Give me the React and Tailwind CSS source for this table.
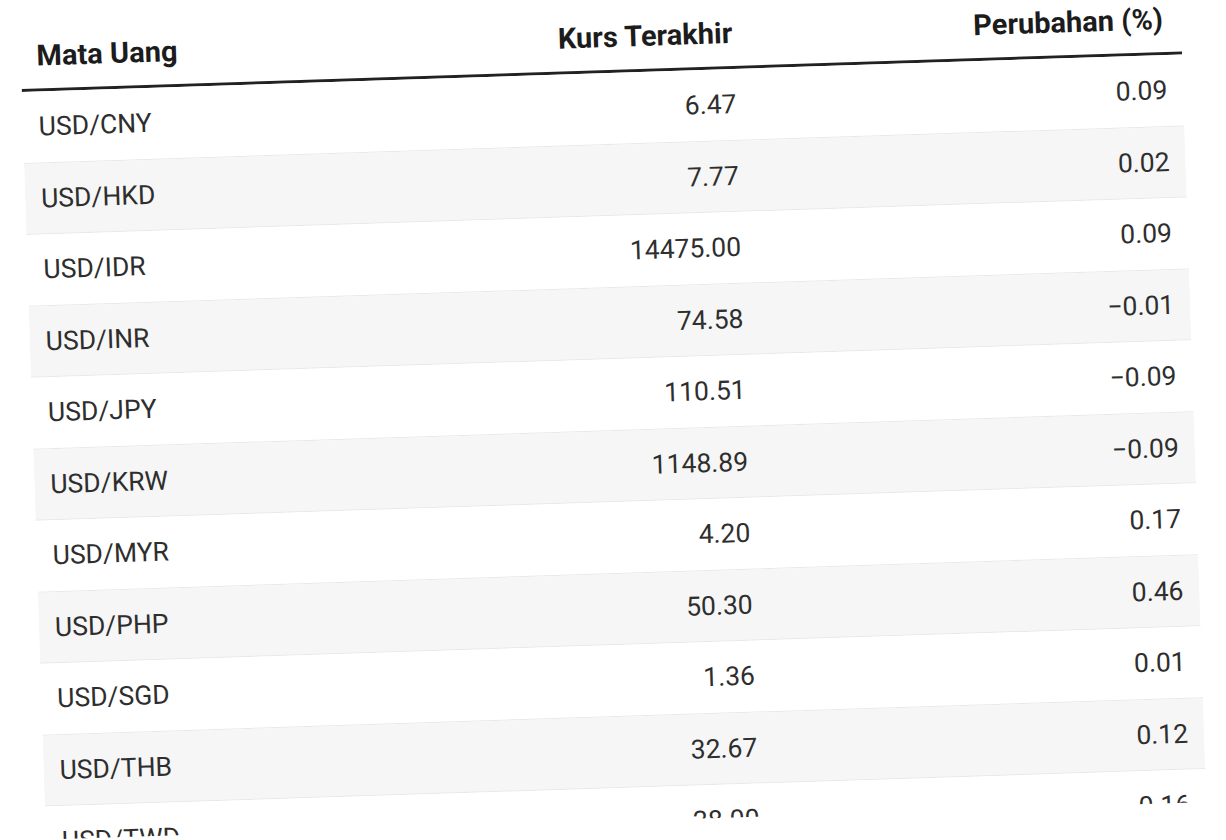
const RATES = [
	{ pair: "USD/CNY", rate: "6.47", change: "0.09" },
	{ pair: "USD/HKD", rate: "7.77", change: "0.02" },
	{ pair: "USD/IDR", rate: "14475.00", change: "0.09" },
	{ pair: "USD/INR", rate: "74.58", change: "\u22120.01" },
	{ pair: "USD/JPY", rate: "110.51", change: "\u22120.09" },
	{ pair: "USD/KRW", rate: "1148.89", change: "\u22120.09" },
	{ pair: "USD/MYR", rate: "4.20", change: "0.17" },
	{ pair: "USD/PHP", rate: "50.30", change: "0.46" },
	{ pair: "USD/SGD", rate: "1.36", change: "0.01" },
	{ pair: "USD/THB", rate: "32.67", change: "0.12" },
	{ pair: "USD/TWD", rate: "28.00", change: "0.16" },
]

// Table is photographed slightly tilted, so the whole block is rotated
export default function App() {
	return (
		<div className="min-h-[840px] w-[1226px] overflow-hidden bg-white" style={{ fontFamily: "Roboto, 'Noto Sans', sans-serif" }}>
			<div className="ml-[20.3px] mt-[38.5px] h-[801px] w-[1161px] origin-top-left rotate-[-1.85deg] overflow-hidden">
				<div className="flex items-end border-b-[3px] border-[#222222] pb-4 text-[29px] font-bold leading-[34px] text-[#1c1c1c]">
					<div className="w-[380px] pl-4">Mata Uang</div>
					<div className="w-[348px] pr-4 text-right">Kurs Terakhir</div>
					<div className="flex-1 pr-[18px] text-right">Perubahan (%)</div>
				</div>
				{RATES.map((row, i) => (
					<div
						key={row.pair}
						className={
							"flex h-[71.5px] items-center border-b border-[#e8e8e8] text-[26.5px] text-[#2e2e2e] " +
							(i % 2 === 1 ? "bg-[#f6f6f6]" : "bg-white")
						}
					>
						<div className="w-[380px] pl-4">{row.pair}</div>
						<div className="w-[350px] pr-4 text-right">{row.rate}</div>
						<div className="flex-1 pr-4 text-right">{row.change}</div>
					</div>
				))}
			</div>
		</div>
	)
}
